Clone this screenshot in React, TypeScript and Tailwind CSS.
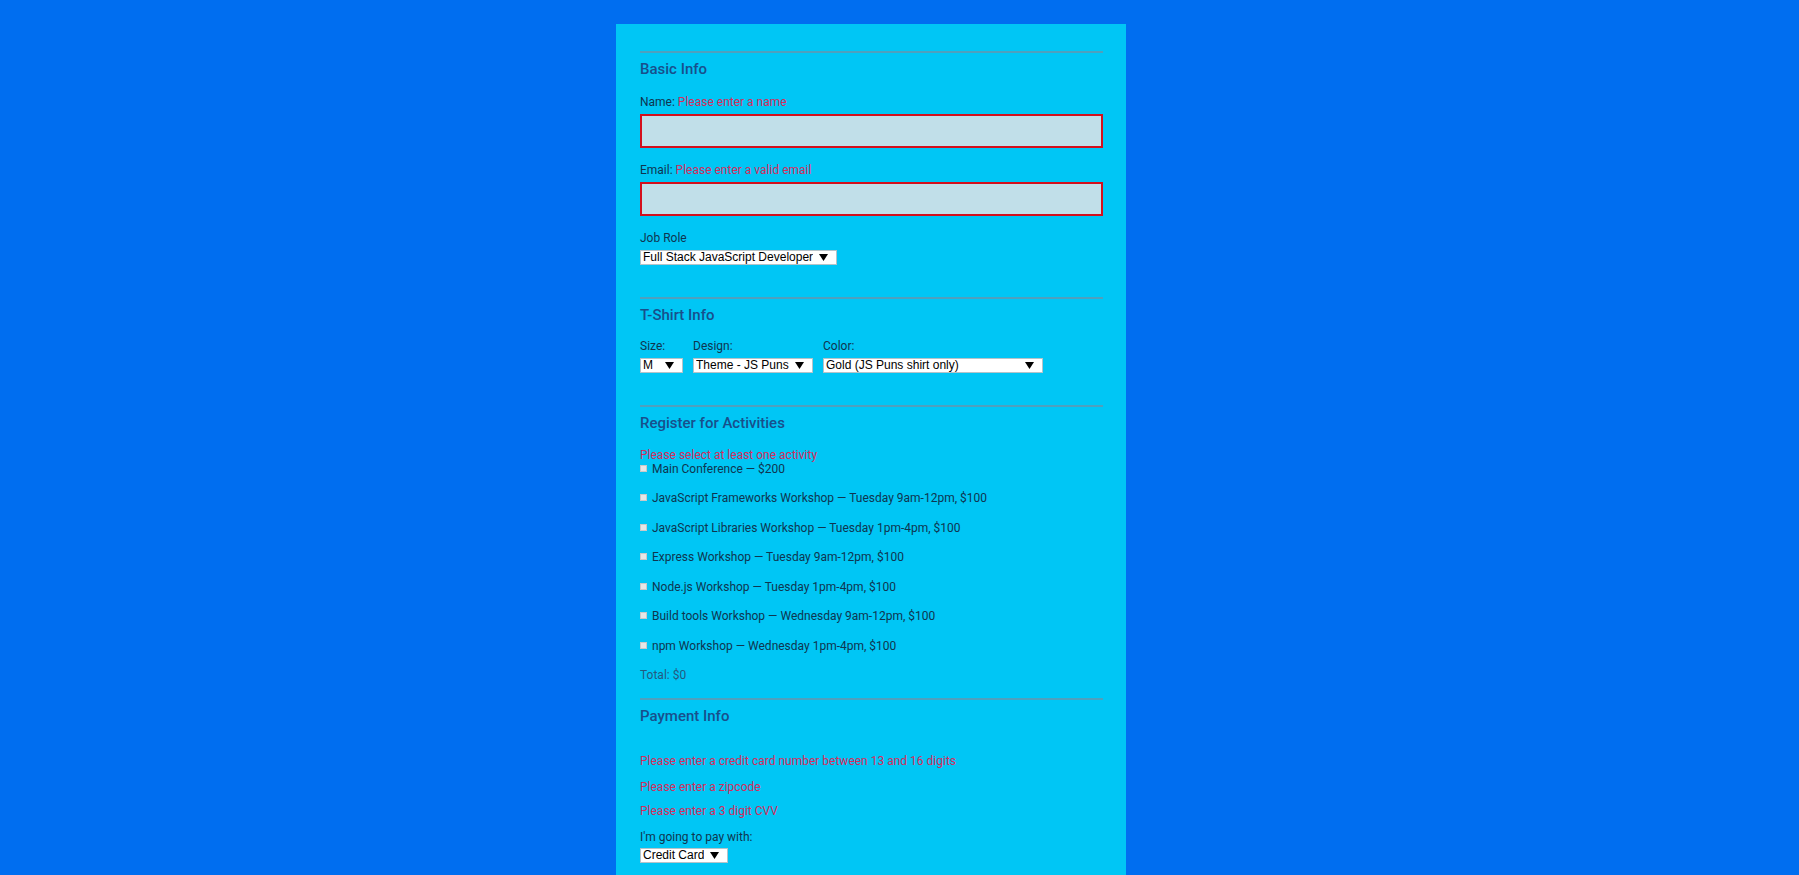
import React from "react";

const Arrow = () => (
  <svg width="9" height="7" viewBox="0 0 9 7" className="shrink-0">
    <polygon points="0,0 9,0 4.5,7" fill="#000" />
  </svg>
);

const FakeSelect = ({ text, w }: { text: string; w: string }) => (
  <div
    className={`${w} h-[15px] bg-white border border-[#b5c3c9] flex items-center justify-between pl-[2px] pr-[8px] text-[12px] leading-[13px] text-black`}
    style={{ fontFamily: '"Liberation Sans", Arial, sans-serif' }}
  >
    <span className="whitespace-nowrap overflow-hidden">{text}</span>
    <Arrow />
  </div>
);

const Divider = ({ cls }: { cls: string }) => (
  <div className={`${cls} h-[2px] bg-[#4fa0bd]`} />
);

const Heading = ({ children }: { children: React.ReactNode }) => (
  <h2 className="mt-[7px] text-[15px] leading-[19px] font-medium text-[#184f8c]">
    {children}
  </h2>
);

const activities = [
  "Main Conference — $200",
  "JavaScript Frameworks Workshop — Tuesday 9am-12pm, $100",
  "JavaScript Libraries Workshop — Tuesday 1pm-4pm, $100",
  "Express Workshop — Tuesday 9am-12pm, $100",
  "Node.js Workshop — Tuesday 1pm-4pm, $100",
  "Build tools Workshop — Wednesday 9am-12pm, $100",
  "npm Workshop — Wednesday 1pm-4pm, $100",
];

const err = "text-[#d62c5c]";

export default function App() {
  return (
    <div
      className="min-h-screen bg-[#006ef0] pt-[24px]"
      style={{ fontFamily: 'Roboto, "Noto Sans", Arial, sans-serif' }}
    >
      <div className="ml-[616px] w-[510px] min-h-[851px] bg-[#00c6f5] pl-[24px] pr-[23px] pt-[27px] text-[12px] leading-[15px] text-[#0f3550]">
        {/* Basic Info */}
        <Divider cls="" />
        <Heading>Basic Info</Heading>
        <div className="mt-[16px]">
          Name: <span className={err}>Please enter a name</span>
        </div>
        <input
          className="mt-[4px] block w-full h-[34px] bg-[#c1dfe9] border-2 border-[#d4101c] outline-none"
          aria-label="Name"
        />
        <div className="mt-[15px]">
          Email: <span className={err}>Please enter a valid email</span>
        </div>
        <input
          className="mt-[4px] block w-full h-[34px] bg-[#c1dfe9] border-2 border-[#d4101c] outline-none"
          aria-label="Email"
        />
        <div className="mt-[15px]">Job Role</div>
        <div className="mt-[4px]">
          <FakeSelect text="Full Stack JavaScript Developer" w="w-[197px]" />
        </div>

        {/* T-Shirt */}
        <Divider cls="mt-[32px]" />
        <Heading>T-Shirt Info</Heading>
        <div className="mt-[14px] flex gap-[10px]">
          <div className="flex flex-col gap-[4px]">
            <span>Size:</span>
            <FakeSelect text="M" w="w-[43px]" />
          </div>
          <div className="flex flex-col gap-[4px]">
            <span>Design:</span>
            <FakeSelect text="Theme - JS Puns" w="w-[120px]" />
          </div>
          <div className="flex flex-col gap-[4px]">
            <span>Color:</span>
            <FakeSelect text="Gold (JS Puns shirt only)" w="w-[220px]" />
          </div>
        </div>

        {/* Activities */}
        <Divider cls="mt-[32px]" />
        <Heading>Register for Activities</Heading>
        <div className={`mt-[15.5px] leading-[13px] ${err}`}>
          Please select at least one activity
        </div>
        <div className="flex flex-col gap-[14.5px]">
          {activities.map((a) => (
            <label key={a} className="flex items-start">
              <span className="mt-[3px] w-[7px] h-[7px] bg-[#e6e6e6] border border-[#c9c9c9] shrink-0" />
              <span className="ml-[5px] whitespace-nowrap">{a}</span>
            </label>
          ))}
          <div className="text-[#245a80]">Total: $0</div>
        </div>

        {/* Payment */}
        <Divider cls="mt-[15px]" />
        <Heading>Payment Info</Heading>
        <div className={`mt-[28px] ${err}`}>
          Please enter a credit card number between 13 and 16 digits
        </div>
        <div className={`mt-[10.5px] ${err}`}>Please enter a zipcode</div>
        <div className={`mt-[9.5px] ${err}`}>Please enter a 3 digit CVV</div>
        <div className="mt-[10.5px]">I'm going to pay with:</div>
        <div className="mt-[3.5px]">
          <FakeSelect text="Credit Card" w="w-[88px]" />
        </div>
      </div>
    </div>
  );
}
